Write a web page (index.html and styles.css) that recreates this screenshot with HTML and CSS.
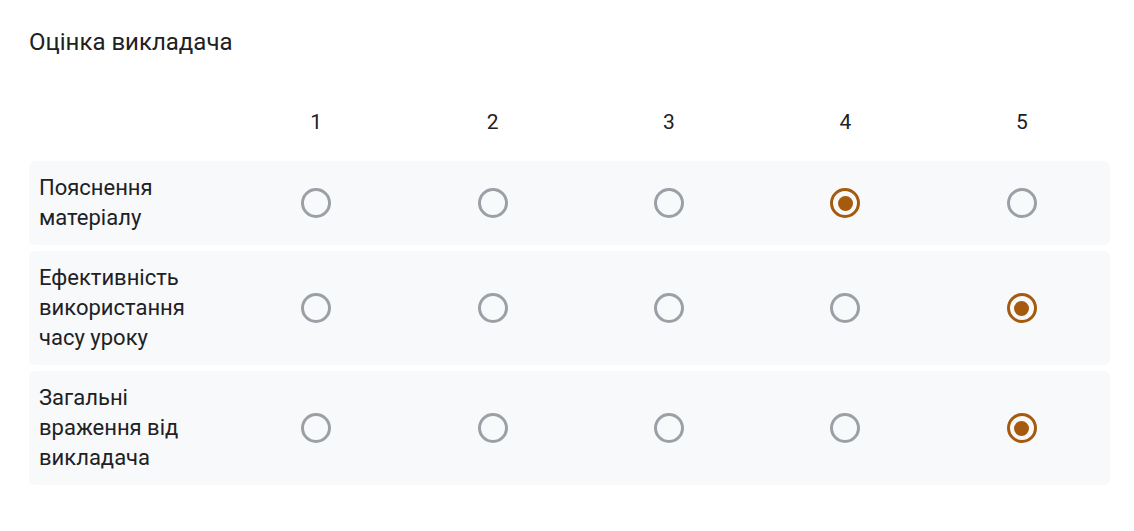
FILE: index.html
```html
<!DOCTYPE html>
<html lang="uk">
<head>
<meta charset="utf-8">
<link rel="stylesheet" href="styles.css">
</head>
<body>
<div class="card">
  <div class="title">Оцінка викладача</div>
  <div class="grid">
    <div class="head">
      <div class="label"></div>
      <div class="cell">1</div>
      <div class="cell">2</div>
      <div class="cell">3</div>
      <div class="cell">4</div>
      <div class="cell">5</div>
    </div>
    <div class="row">
      <div class="label">Пояснення матеріалу</div>
      <div class="cell"><span class="radio"></span></div>
      <div class="cell"><span class="radio"></span></div>
      <div class="cell"><span class="radio"></span></div>
      <div class="cell"><span class="radio checked"></span></div>
      <div class="cell"><span class="radio"></span></div>
    </div>
    <div class="row">
      <div class="label">Ефективність використання часу уроку</div>
      <div class="cell"><span class="radio"></span></div>
      <div class="cell"><span class="radio"></span></div>
      <div class="cell"><span class="radio"></span></div>
      <div class="cell"><span class="radio"></span></div>
      <div class="cell"><span class="radio checked"></span></div>
    </div>
    <div class="row">
      <div class="label">Загальні враження від викладача</div>
      <div class="cell"><span class="radio"></span></div>
      <div class="cell"><span class="radio"></span></div>
      <div class="cell"><span class="radio"></span></div>
      <div class="cell"><span class="radio"></span></div>
      <div class="cell"><span class="radio checked"></span></div>
    </div>
  </div>
</div>
</body>
</html>
```
FILE: styles.css
```css
html, body {
  margin: 0;
  padding: 0;
  background: #ffffff;
}
body {
  font-family: Roboto, "Noto Sans", Arial, sans-serif;
  color: #202124;
}
.card {
  padding: 27px 24px 0 29px;
}
.title {
  font-size: 24px;
  line-height: 30px;
  letter-spacing: 0;
}
.grid {
  margin-top: 45px;
  width: 1081px;
  display: flex;
  flex-direction: column;
  gap: 6px;
}
.head, .row {
  display: grid;
  grid-template-columns: 199px repeat(5, 1fr);
  align-items: center;
}
.head {
  height: 40px;
  font-size: 21px;
  line-height: 30px;
  margin-bottom: 13px;
}
.row {
  background: #f8f9fa;
  border-radius: 6px;
  padding: 12px 0;
  font-size: 22px;
  line-height: 30px;
}
.label {
  padding: 0 14px 0 10px;
}
.cell {
  display: flex;
  justify-content: center;
  align-items: center;
}
.radio {
  box-sizing: border-box;
  width: 30px;
  height: 30px;
  border: 3px solid #9aa0a6;
  border-radius: 50%;
  display: flex;
  align-items: center;
  justify-content: center;
}
.radio.checked {
  border-color: #a65a0d;
}
.radio.checked::after {
  content: "";
  width: 15px;
  height: 15px;
  border-radius: 50%;
  background: #a65a0d;
}
```
